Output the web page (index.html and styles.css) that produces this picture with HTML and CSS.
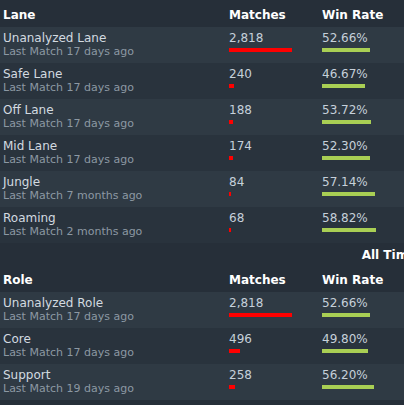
FILE: index.html
```html
<!DOCTYPE html>
<html lang="en">
<head>
    <meta charset="UTF-8">
    <meta name="viewport" content="width=device-width, initial-scale=1.0">
    <title>Lanes and Roles</title>
    <link rel="stylesheet" href="styles.css">
</head>
<body>

    <div class="page">
        <table class="stats">
            <colgroup><col class="col-name"><col class="col-matches"><col></colgroup>
            <thead>
                <tr><th>Lane</th><th>Matches</th><th>Win Rate</th></tr>
            </thead>
            <tbody>
                <tr>
                    <td><div class="name">Unanalyzed Lane</div><div class="sub">Last Match 17 days ago</div></td>
                    <td><div class="value">2,818</div><div class="bar bar-matches" style="width:63px"></div></td>
                    <td><div class="value">52.66%</div><div class="bar-track"><div class="bar bar-win" style="width:52.66%"></div></div></td>
                </tr>
                <tr>
                    <td><div class="name">Safe Lane</div><div class="sub">Last Match 17 days ago</div></td>
                    <td><div class="value">240</div><div class="bar bar-matches" style="width:5px"></div></td>
                    <td><div class="value">46.67%</div><div class="bar-track"><div class="bar bar-win" style="width:46.67%"></div></div></td>
                </tr>
                <tr>
                    <td><div class="name">Off Lane</div><div class="sub">Last Match 17 days ago</div></td>
                    <td><div class="value">188</div><div class="bar bar-matches" style="width:4px"></div></td>
                    <td><div class="value">53.72%</div><div class="bar-track"><div class="bar bar-win" style="width:53.72%"></div></div></td>
                </tr>
                <tr>
                    <td><div class="name">Mid Lane</div><div class="sub">Last Match 17 days ago</div></td>
                    <td><div class="value">174</div><div class="bar bar-matches" style="width:4px"></div></td>
                    <td><div class="value">52.30%</div><div class="bar-track"><div class="bar bar-win" style="width:52.30%"></div></div></td>
                </tr>
                <tr>
                    <td><div class="name">Jungle</div><div class="sub">Last Match 7 months ago</div></td>
                    <td><div class="value">84</div><div class="bar bar-matches" style="width:2px"></div></td>
                    <td><div class="value">57.14%</div><div class="bar-track"><div class="bar bar-win" style="width:57.14%"></div></div></td>
                </tr>
                <tr>
                    <td><div class="name">Roaming</div><div class="sub">Last Match 2 months ago</div></td>
                    <td><div class="value">68</div><div class="bar bar-matches" style="width:2px"></div></td>
                    <td><div class="value">58.82%</div><div class="bar-track"><div class="bar bar-win" style="width:58.82%"></div></div></td>
                </tr>
            </tbody>
        </table>

        <div class="caption">All Time</div>

        <table class="stats">
            <colgroup><col class="col-name"><col class="col-matches"><col></colgroup>
            <thead>
                <tr><th>Role</th><th>Matches</th><th>Win Rate</th></tr>
            </thead>
            <tbody>
                <tr>
                    <td><div class="name">Unanalyzed Role</div><div class="sub">Last Match 17 days ago</div></td>
                    <td><div class="value">2,818</div><div class="bar bar-matches" style="width:63px"></div></td>
                    <td><div class="value">52.66%</div><div class="bar-track"><div class="bar bar-win" style="width:52.66%"></div></div></td>
                </tr>
                <tr>
                    <td><div class="name">Core</div><div class="sub">Last Match 17 days ago</div></td>
                    <td><div class="value">496</div><div class="bar bar-matches" style="width:11px"></div></td>
                    <td><div class="value">49.80%</div><div class="bar-track"><div class="bar bar-win" style="width:49.80%"></div></div></td>
                </tr>
                <tr>
                    <td><div class="name">Support</div><div class="sub">Last Match 19 days ago</div></td>
                    <td><div class="value">258</div><div class="bar bar-matches" style="width:6px"></div></td>
                    <td><div class="value">56.20%</div><div class="bar-track"><div class="bar bar-win" style="width:56.20%"></div></div></td>
                </tr>
            </tbody>
        </table>
    </div>

</body>
</html>
```

FILE: styles.css
```css
* {
    box-sizing: border-box;
    margin: 0;
    padding: 0;
}

body {
    background-color: #262f39;
    font-family: "DejaVu Sans", Verdana, sans-serif;
    color: #c6d0da;
    overflow: hidden;
}

.page {
    width: 778px;
}

.stats {
    width: 100%;
    border-collapse: collapse;
    table-layout: fixed;
}

.col-name {
    width: 226px;
}

.col-matches {
    width: 93px;
}

.stats th {
    color: #fff;
    font-size: 12px;
    font-weight: bold;
    line-height: 14px;
    text-align: left;
    padding: 8px 0 5px 3px;
}

.stats td {
    vertical-align: top;
    padding: 4px 0 5px 3px;
    height: 36px;
}

.stats tbody tr:nth-child(odd) {
    background-color: #2f3a44;
}

.stats tbody tr:nth-child(even) {
    background-color: #29333d;
}

.name {
    font-size: 12px;
    line-height: 14px;
    color: #d3dae0;
}

.sub {
    font-size: 11px;
    line-height: 13px;
    color: #8c98a3;
}

.value {
    font-size: 12px;
    line-height: 14px;
}

.bar {
    height: 4px;
    margin-top: 3px;
}

.bar-matches {
    background-color: #ff0000;
}

.bar-track {
    width: 92px;
}

.bar-win {
    background-color: #a9cf54;
}

.caption {
    text-align: center;
    color: #fff;
    font-size: 12px;
    font-weight: bold;
    line-height: 14px;
    padding: 5px 0 3px;
}
```
